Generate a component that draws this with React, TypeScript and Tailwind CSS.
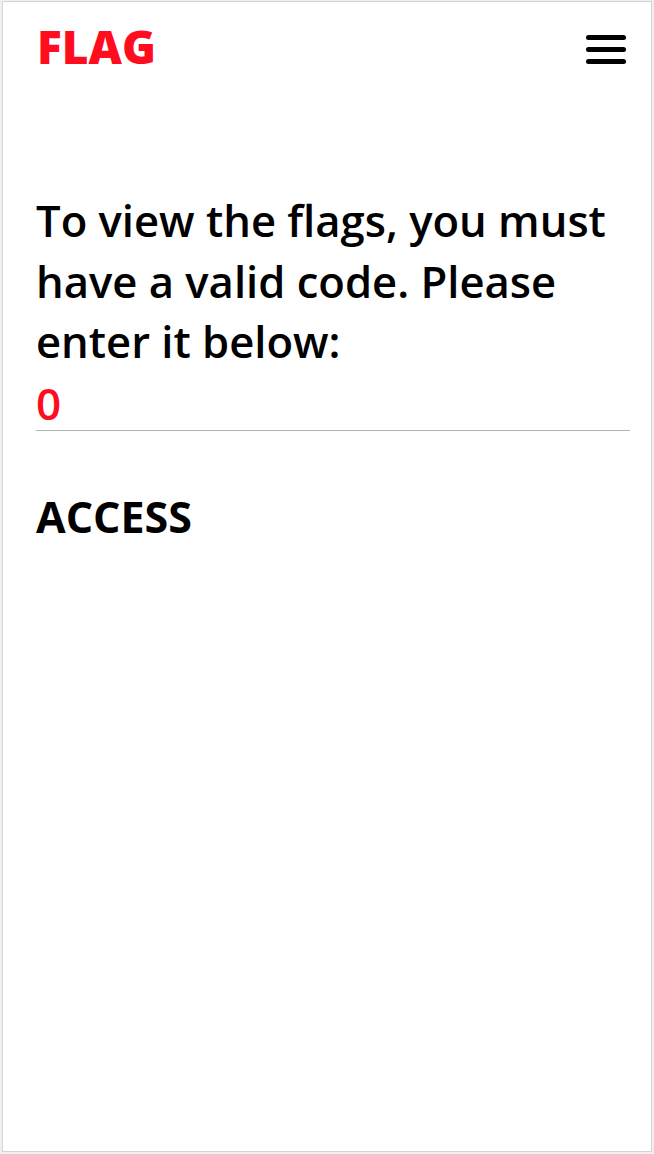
import React from "react";

export default function App() {
  return (
    <div className="w-[654px] h-[1154px] bg-[#f0f0f0] pt-px px-[2px] pb-[2px]">
      <div className="h-full bg-white border border-[#d4d4d4] flex flex-col font-['Open_Sans',sans-serif]">
        <header className="flex items-start justify-between pl-[34px] pr-[25px] pt-[16px]">
          <div className="text-[#ff0c1f] text-[46px] font-extrabold leading-[56px]">FLAG</div>
          <button className="flex flex-col gap-[7px] mt-[17px]" aria-label="menu">
            <span className="block w-[40px] h-[5px] rounded-[3px] bg-black" />
            <span className="block w-[40px] h-[5px] rounded-[3px] bg-black" />
            <span className="block w-[40px] h-[5px] rounded-[3px] bg-black" />
          </button>
        </header>
        <main className="pl-[33px] pr-[21px] pt-[116px]">
          <p className="text-black text-[43.6px] font-semibold leading-[60.5px]">
            To view the flags, you must have a valid code. Please enter it below:
          </p>
          <div className="mt-[4px] border-b-[1.5px] border-[#b4b4b4]">
            <input
              className="block w-full text-[#ff0c1f] text-[44px] font-semibold leading-[54px] h-[54px] outline-none bg-transparent"
              defaultValue="0"
            />
          </div>
          <div className="mt-[60px] text-black text-[43px] font-bold leading-[52px]">ACCESS</div>
        </main>
      </div>
    </div>
  );
}
